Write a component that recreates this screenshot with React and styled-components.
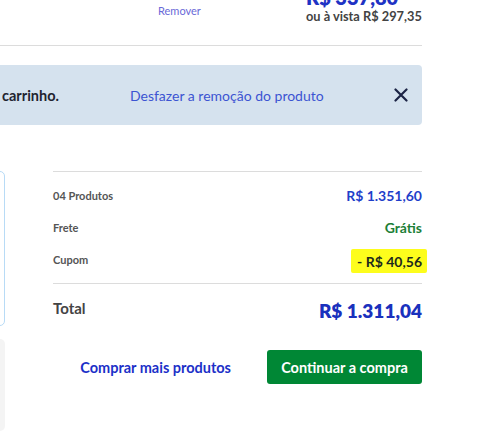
import React from 'react'
import styled, { createGlobalStyle } from 'styled-components'

const GlobalStyle = createGlobalStyle`
  body {
    margin: 0;
    background: #ffffff;
    font-family: Lato, "Open Sans", Arial, sans-serif;
  }
`

const summary = [
  { label: '04 Produtos', value: 'R$ 1.351,60', kind: 'price' },
  { label: 'Frete', value: 'Grátis', kind: 'free' },
  { label: 'Cupom', value: '- R$ 40,56', kind: 'coupon' },
]

const App = () => {
  return (
    <Page>
      <GlobalStyle />
      <Content>
        <ProductRow>
          <ProductInfo>Tênis Esportivo Masculino</ProductInfo>
          <Actions>
            <RemoveLink>Remover</RemoveLink>
          </Actions>
          <PriceCol>
            <Price>R$ 337,80</Price>
            <CashPrice>ou à vista R$ 297,35</CashPrice>
          </PriceCol>
        </ProductRow>

        <Banner>
          <Message>O produto foi removido do carrinho.</Message>
          <UndoLink>Desfazer a remoção do produto</UndoLink>
          <CloseButton aria-label="Fechar">
            <svg width="14" height="14" viewBox="0 0 14 14">
              <path d="M1.5 1.5 L12.5 12.5 M12.5 1.5 L1.5 12.5" stroke="#1c2445" strokeWidth="2.2" strokeLinecap="round" />
            </svg>
          </CloseButton>
        </Banner>

        <Bottom>
          <SideCol>
            <CouponCard />
            <InfoCard />
          </SideCol>
          <Summary>
            <SummaryList>
              {summary.map((item) => (
                <SummaryRow key={item.label}>
                  <Label>{item.label}</Label>
                  {item.kind === 'coupon' ? (
                    <Highlight>{item.value}</Highlight>
                  ) : (
                    <Value $kind={item.kind}>{item.value}</Value>
                  )}
                </SummaryRow>
              ))}
            </SummaryList>
            <TotalRow>
              <TotalLabel>Total</TotalLabel>
              <TotalValue>R$ 1.311,04</TotalValue>
            </TotalRow>
            <ButtonRow>
              <MoreLink>Comprar mais produtos</MoreLink>
              <ContinueButton>Continuar a compra</ContinueButton>
            </ButtonRow>
          </Summary>
        </Bottom>
      </Content>
    </Page>
  )
}

export default App

const Page = styled.div`
  width: 500px;
  height: 435px;
  overflow: hidden;
  position: relative;
`

const Content = styled.div`
  width: 722px;
  margin-left: -300px;
`

const ProductRow = styled.div`
  display: flex;
  align-items: flex-start;
  margin-top: -14px;
  padding-bottom: 20px;
  border-bottom: 1px solid #dcdcdc;
`

const ProductInfo = styled.div`
  width: 458px;
  font-size: 13px;
  color: #333;
  visibility: hidden;
`

const Actions = styled.div`
  width: 148px;
  padding-top: 13px;
`

const RemoveLink = styled.span`
  font-size: 11px;
  line-height: 14px;
  color: #6a6ad8;
  cursor: pointer;
`

const PriceCol = styled.div`
  width: 116px;
  display: flex;
  flex-direction: column;
  white-space: nowrap;
`

const Price = styled.div`
  font-size: 20px;
  line-height: 22px;
  font-weight: 800;
  color: #1f33c4;
`

const CashPrice = styled.div`
  font-size: 12.8px;
  line-height: 17px;
  font-weight: 700;
  color: #434343;
`

const Banner = styled.div`
  margin-top: 19px;
  height: 60px;
  background: #d5e2ee;
  border-radius: 4px;
  display: flex;
  align-items: center;
  padding-right: 14px;
`

const Message = styled.div`
  width: 359px;
  text-align: right;
  white-space: nowrap;
  font-size: 14.5px;
  font-weight: 700;
  color: #1f2430;
`

const UndoLink = styled.span`
  margin-left: 71px;
  font-size: 14px;
  color: #3c54d2;
  cursor: pointer;
`

const CloseButton = styled.button`
  margin-left: auto;
  width: 14px;
  height: 14px;
  padding: 0;
  border: none;
  background: none;
  display: flex;
  cursor: pointer;
`

const Bottom = styled.div`
  margin-top: 46px;
  display: flex;
  gap: 48px;
`

const SideCol = styled.div`
  width: 305px;
  display: flex;
  flex-direction: column;
  gap: 13px;
`

const CouponCard = styled.div`
  height: 155px;
  box-sizing: border-box;
  border: 1.5px solid #b8dbf6;
  border-radius: 5px;
`

const InfoCard = styled.div`
  height: 92px;
  background: #f4f4f4;
  border-radius: 5px;
`

const Summary = styled.div`
  width: 369px;
  display: flex;
  flex-direction: column;
`

const SummaryList = styled.div`
  border-top: 1px solid #dcdcdc;
  border-bottom: 1px solid #dcdcdc;
  padding: 7px 0 8px;
`

const SummaryRow = styled.div`
  height: 32px;
  display: flex;
  align-items: center;
  justify-content: space-between;
`

const Label = styled.span`
  font-size: 11px;
  font-weight: 700;
  color: #555;
`

const Value = styled.span`
  font-size: 14px;
  font-weight: 700;
  color: ${(p) => (p.$kind === 'free' ? '#1d8037' : '#1f3fca')};
`

const Highlight = styled.span`
  font-size: 14px;
  font-weight: 700;
  color: #1c2a1c;
  background: #fdfd1c;
  padding: 4px 5px 3px 6px;
  margin-right: -5px;
  margin-top: 3px;
  border-radius: 2px;
`

const TotalRow = styled.div`
  height: 48px;
  display: flex;
  align-items: center;
  justify-content: space-between;
`

const TotalLabel = styled.span`
  font-size: 15px;
  font-weight: 700;
  color: #444;
`

const TotalValue = styled.span`
  font-size: 19px;
  font-weight: 800;
  color: #1a31bd;
  margin-top: 5px;
`

const ButtonRow = styled.div`
  margin-top: 18px;
  display: flex;
  align-items: center;
  justify-content: flex-end;
  gap: 36px;
`

const MoreLink = styled.span`
  font-size: 14.5px;
  font-weight: 700;
  color: #1c30c8;
  cursor: pointer;
`

const ContinueButton = styled.button`
  width: 155px;
  height: 34px;
  border: none;
  border-radius: 3px;
  background: #008735;
  color: #ffffff;
  font-family: inherit;
  font-size: 14.5px;
  font-weight: 700;
  cursor: pointer;
`
